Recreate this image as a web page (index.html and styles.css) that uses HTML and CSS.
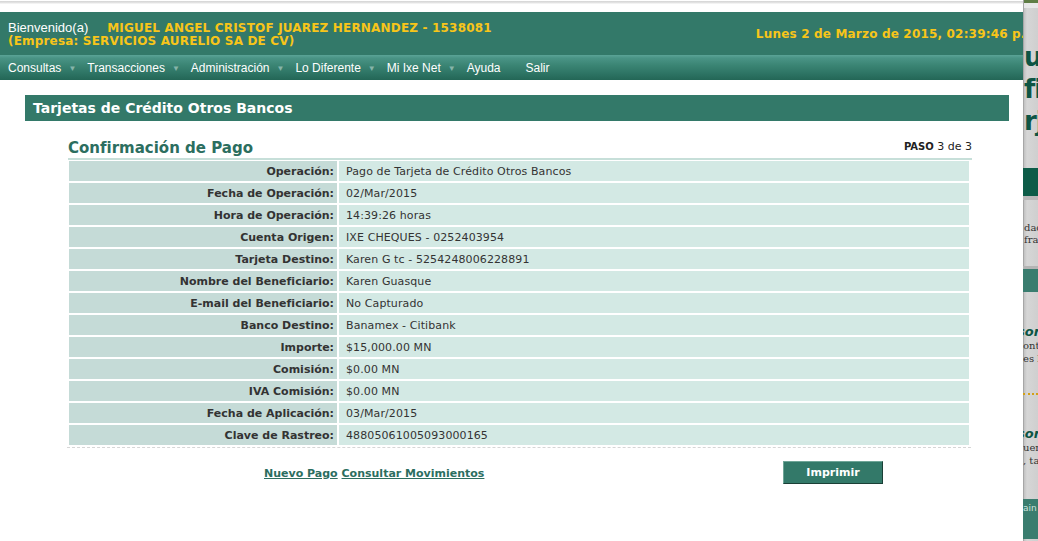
FILE: index.html
```html
<!DOCTYPE html>
<html lang="es">
<head>
<meta charset="utf-8">
<title>Confirmación de Pago</title>
<link rel="stylesheet" href="styles.css">
</head>
<body>
<div class="page">
  <div class="topstrip"></div>
  <header class="header">
    <div class="welcome">
      <div class="line1"><span class="hello">Bienvenido(a)</span><span class="user">MIGUEL ANGEL CRISTOF JUAREZ HERNANDEZ - 1538081</span></div>
      <div class="line2">(Empresa: SERVICIOS AURELIO SA DE CV)</div>
    </div>
    <div class="date">Lunes 2 de Marzo de 2015, 02:39:46 p.m.</div>
  </header>
  <nav class="nav">
    <span class="item">Consultas<span class="arr">▼</span></span>
    <span class="item">Transacciones<span class="arr">▼</span></span>
    <span class="item">Administración<span class="arr">▼</span></span>
    <span class="item">Lo Diferente<span class="arr">▼</span></span>
    <span class="item">Mi Ixe Net<span class="arr">▼</span></span>
    <span class="item">Ayuda</span>
    <span class="item salir">Salir</span>
  </nav>
  <div class="titlebar">Tarjetas de Crédito Otros Bancos</div>
  <main class="content">
    <div class="headrow">
      <h1>Confirmación de Pago</h1>
      <div class="paso"><b>PASO</b> 3 de 3</div>
    </div>
    <table class="data">
      <tr><th>Operación:</th><td>Pago de Tarjeta de Crédito Otros Bancos</td></tr>
      <tr><th>Fecha de Operación:</th><td>02/Mar/2015</td></tr>
      <tr><th>Hora de Operación:</th><td>14:39:26 horas</td></tr>
      <tr><th>Cuenta Origen:</th><td>IXE CHEQUES - 0252403954</td></tr>
      <tr><th>Tarjeta Destino:</th><td>Karen G tc - 5254248006228891</td></tr>
      <tr><th>Nombre del Beneficiario:</th><td>Karen Guasque</td></tr>
      <tr><th>E-mail del Beneficiario:</th><td>No Capturado</td></tr>
      <tr><th>Banco Destino:</th><td>Banamex - Citibank</td></tr>
      <tr><th>Importe:</th><td>$15,000.00 MN</td></tr>
      <tr><th>Comisión:</th><td>$0.00 MN</td></tr>
      <tr><th>IVA Comisión:</th><td>$0.00 MN</td></tr>
      <tr><th>Fecha de Aplicación:</th><td>03/Mar/2015</td></tr>
      <tr><th>Clave de Rastreo:</th><td>48805061005093000165</td></tr>
    </table>
    <div class="actions">
      <div class="links"><a href="#">Nuevo Pago</a> <a href="#">Consultar Movimientos</a></div>
      <button class="btn">Imprimir</button>
    </div>
  </main>
</div>
<div class="bgwin">
  <div class="bw-top"></div>
  <div class="bw-big">u</div>
  <div class="bw-big">fi</div>
  <div class="bw-big">rj</div>
  <div class="bw-bar1"></div>
  <div class="bw-small">dad<br>fra</div>
  <div class="bw-bar2"></div>
  <div class="bw-it">sor</div>
  <div class="bw-small2">onto<br>es l</div>
  <div class="bw-dots"></div>
  <div class="bw-it it2">sor</div>
  <div class="bw-small2">uen<br>, tar</div>
  <div class="bw-bar3">ain</div>
</div>
</body>
</html>
```
FILE: styles.css
```css
html, body {
  margin: 0;
  padding: 0;
  background: #fff;
  overflow: hidden;
}
body {
  width: 1038px;
  height: 541px;
  position: relative;
  font-family: "DejaVu Sans", Verdana, sans-serif;
}
.page {
  width: 1024px;
  overflow: hidden;
}
.topstrip {
  height: 12px;
  background: linear-gradient(#fff 0, #fff 1px, #d4d4d4 1px, #e6e6e6 3px, #fff 4px);
}
.header {
  height: 43px;
  background: #337969;
  display: flex;
  justify-content: space-between;
  align-items: center;
  white-space: nowrap;
}
.welcome {
  padding-left: 8px;
}
.line1 {
  height: 15px;
  line-height: 15px;
}
.hello {
  font-family: "Liberation Sans", Arial, sans-serif;
  color: #fff;
  font-size: 13px;
  margin-right: 19px;
}
.user, .line2, .date {
  color: #f8c519;
  font-weight: bold;
  font-size: 12px;
  letter-spacing: 0.18px;
}
.line2 {
  line-height: 15px;
}
.date {
  margin-right: -19px;
}
.nav {
  height: 25px;
  background: linear-gradient(#5ba497 0, #4a9486 3px, #3b8574 10px, #2e7565 18px, #236656 25px);
  display: flex;
  align-items: center;
  font-family: "Liberation Sans", Arial, sans-serif;
  font-size: 12px;
  color: #fff;
  padding-left: 8px;
  white-space: nowrap;
}
.item {
  margin-right: 11px;
}
.arr {
  color: #86b4a9;
  font-size: 8px;
  margin-left: 7px;
  position: relative;
  top: -1px;
}
.salir {
  margin-left: 14px;
}
.titlebar {
  margin: 15px 15px 0 25px;
  height: 26px;
  line-height: 26px;
  background: #337969;
  color: #fff;
  font-weight: bold;
  font-size: 14px;
  padding-left: 8px;
}
.content {
  margin-left: 68px;
  width: 904px;
}
.headrow {
  display: flex;
  justify-content: space-between;
  align-items: flex-end;
  margin-top: 18px;
  border-bottom: 2px solid #c7dfd9;
  padding-bottom: 1px;
}
h1 {
  margin: 0;
  font-size: 15px;
  color: #2c6e5f;
  font-weight: bold;
  line-height: 18px;
}
.paso {
  font-size: 11px;
  color: #222;
  line-height: 16px;
  padding-bottom: 2px;
}
.paso b {
  font-size: 10px;
}
.data {
  border-collapse: separate;
  border-spacing: 2px;
  margin-left: -1px;
  width: 904px;
  font-size: 11px;
  color: #333;
  border-bottom: 1px dashed #d6d6d6;
  margin-top: -1px;
}
.data th {
  width: 265px;
  background: #c5dbd7;
  text-align: right;
  font-weight: bold;
  padding: 0 3px 0 0;
  height: 20px;
  white-space: nowrap;
}
.data td {
  background: #d3e9e4;
  padding: 0 0 0 7px;
  height: 20px;
  letter-spacing: 0.1px;
}
.actions {
  display: flex;
  justify-content: space-between;
  align-items: center;
  margin-top: 13px;
  padding-left: 196px;
  padding-right: 89px;
}
.links {
  font-size: 11px;
  font-weight: bold;
  margin-top: 2px;
}
.links a {
  color: #2c6e5f;
  text-decoration: underline;
}
.btn {
  width: 100px;
  height: 23px;
  background: #337969;
  color: #fff;
  font-family: "DejaVu Sans", Verdana, sans-serif;
  font-weight: bold;
  font-size: 11px;
  border: 1px solid #1a3f36;
  border-top-color: #6fa597;
  border-left-color: #6fa597;
  padding: 0;
}
.bgwin {
  position: absolute;
  left: 1023px;
  top: 0;
  width: 15px;
  height: 541px;
  overflow: hidden;
  background: linear-gradient(90deg, #8b8b8b 0, #c2c2c2 1px, #d6d6d6 4px, #cfcfcf 15px);
  font-family: "DejaVu Sans", sans-serif;
  white-space: nowrap;
}
.bw-top {
  height: 8px;
  background: linear-gradient(#5f7d45 0, #5f7d45 3px, #e8e8e8 3px);
  margin-left: 1px;
}
.bw-big {
  color: #0e5544;
  font-weight: bold;
  font-size: 26px;
  line-height: 32px;
  letter-spacing: -1px;
  padding-left: 1px;
  font-variant-ligatures: none;
}
.bw-top + .bw-big { margin-top: 33px; }
.bw-bar1 {
  height: 28px;
  margin-top: 31px;
  background: #0d5c48;
  border-bottom: 4px solid #b8b8b8;
}
.bw-small {
  font-family: "DejaVu Serif", serif;
  font-size: 10px;
  line-height: 12px;
  color: #333;
  margin-top: 22px;
  margin-left: 1px;
}
.bw-bar2 {
  height: 23px;
  margin-top: 20px;
  background: #3a7d6f;
  border-top: 3px solid #b4b4b4;
}
.bw-it {
  color: #0e5544;
  font-style: italic;
  font-weight: bold;
  font-size: 13px;
  margin-top: 32px;
  margin-left: -6px;
}
.bw-small2 {
  font-family: "DejaVu Serif", serif;
  font-size: 10px;
  line-height: 13px;
  color: #333;
}
.bw-dots {
  margin-top: 28px;
  border-top: 2px dotted #d4a017;
  width: 15px;
}
.it2 { margin-top: 31px; }
.bw-bar3 {
  margin-top: 32px;
  height: 40px;
  background: #3a7d6f;
  color: #cfe3dd;
  font-size: 9px;
  line-height: 18px;
}
```
